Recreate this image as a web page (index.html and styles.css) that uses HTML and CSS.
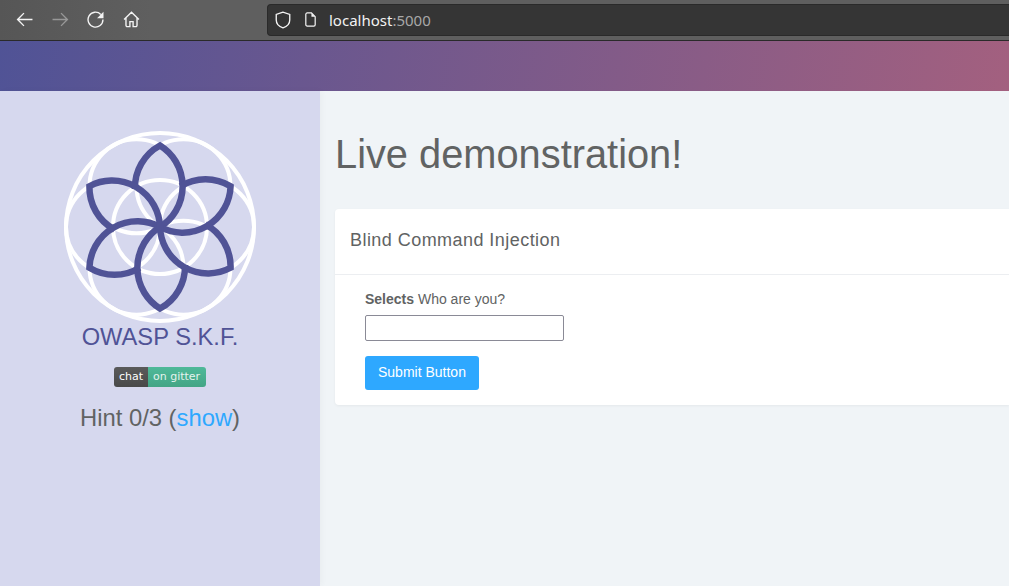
FILE: index.html
```html
<!DOCTYPE html>
<html lang="en">
<head>
    <title>OWASP S.K.F.</title>
    <meta charset="UTF-8">
    <link rel="stylesheet" href="styles.css">
</head>

<body>
    <div class="toolbar">
        <nav class="nav-icons">
            <svg class="icon" viewBox="0 0 16 16"><path d="M15.500 8H1.500M7.500 2 1.500 8l6 6"/></svg>
            <svg class="icon dim" viewBox="0 0 16 16"><path d="M.5 8h14M8.500 2l6 6-6 6"/></svg>
            <svg class="icon" viewBox="0 0 16 16"><path d="M13 3.200A7 7 0 1 0 15 8"/><path class="fill" d="M15.500 .8v6H9.500z"/></svg>
            <svg class="icon" viewBox="0 0 16 16"><path d="M1 8 8 1.200 15 8M2.800 6.500v7A1.200 1.200 0 0 0 4 14.700h2.500V10h3v4.700H12a1.200 1.200 0 0 0 1.200-1.200v-7"/></svg>
        </nav>
        <div class="urlbar">
            <svg class="icon shield" viewBox="0 0 16 16"><path d="M8 1 2 3v5c0 3.500 3 6 6 7 3-1 6-3.500 6-7V3z"/></svg>
            <svg class="icon page" viewBox="0 0 16 16"><path d="M3 2.500A1.500 1.500 0 0 1 4.500 1H9l4 4v8.500a1.500 1.500 0 0 1-1.500 1.500h-7A1.500 1.500 0 0 1 3 13.500z"/><path class="fill" d="M9 1l4 4H9z"/></svg>
            <span class="url">localhost<span class="port">:5000</span></span>
        </div>
    </div>

    <header class="banner"></header>

    <div class="layout">
        <aside class="sidebar">
            <svg class="logo" viewBox="-100 -100 200 200">
                <g class="logo-white">
                    <circle r="94"/>
                    <circle r="47"/>
                    <circle cx="47" r="47"/>
                    <circle cx="-47" r="47"/>
                    <circle cx="23.500" cy="-40.700" r="47"/>
                    <circle cx="-23.500" cy="-40.700" r="47"/>
                    <circle cx="23.500" cy="40.700" r="47"/>
                    <circle cx="-23.500" cy="40.700" r="47"/>
                </g>
                <g class="logo-blue">
                    <path id="petal" d="M-25-38A48 48 0 0 1 0-81.500A48 48 0 0 1 0 0"/>
                    <use href="#petal" transform="rotate(60)"/>
                    <use href="#petal" transform="rotate(120)"/>
                    <use href="#petal" transform="rotate(180)"/>
                    <use href="#petal" transform="rotate(240)"/>
                    <use href="#petal" transform="rotate(300)"/>
                </g>
            </svg>
            <h2 class="brand">OWASP S.K.F.</h2>
            <a class="badge"><span class="badge-left">chat</span><span class="badge-right">on gitter</span></a>
            <p class="hint">Hint 0/3 (<a>show</a>)</p>
        </aside>

        <main class="content">
            <h1>Live demonstration!</h1>
            <section class="card">
                <div class="card-head">Blind Command Injection</div>
                <form class="card-body">
                    <label class="field-label"><b>Selects</b> Who are you?</label>
                    <input class="field" type="text">
                    <button type="button" class="btn">Submit Button</button>
                </form>
            </section>
        </main>
    </div>
</body>
</html>
```

FILE: styles.css
```css
html, body {
    margin: 0;
    height: 100%;
    overflow: hidden;
}

body {
    display: flex;
    flex-direction: column;
    font-family: "Liberation Sans", Arial, sans-serif;
    color: #616363;
    background-color: #f0f4f7;
}

/* browser chrome */
.toolbar {
    display: flex;
    align-items: center;
    flex: none;
    box-sizing: border-box;
    height: 41px;
    padding: 0 0 1px 16px;
    background: linear-gradient(to right, #565656, #5f5f5f 15%);
    border-bottom: 1px solid #2a2a2a;
}

.nav-icons {
    display: flex;
    gap: 18.500px;
    width: 251px;
}

.icon {
    flex: none;
    width: 17px;
    height: 17px;
    fill: none;
    stroke: #f4f4f4;
    stroke-width: 1.300;
}

.icon .fill {
    fill: #f4f4f4;
    stroke: none;
}

.icon.dim {
    stroke: #989898;
}

.icon.shield {
    width: 18px;
    height: 18px;
    stroke-width: 1.200;
}

.icon.page {
    width: 15px;
    height: 15px;
    margin-left: 11px;
    margin-right: 11px;
}

.urlbar {
    display: flex;
    align-items: center;
    flex: 1;
    height: 32px;
    padding-left: 6px;
    box-sizing: border-box;
    background-color: #353535;
    border: 1px solid #2a2a2a;
    border-right: none;
    border-radius: 4px 0 0 4px;
}

.url {
    font-family: "Noto Sans", sans-serif;
    font-size: 15px;
    color: #f2f2f2;
}

.port {
    color: #a8a8a8;
}

/* page */
.banner {
    flex: none;
    height: 50px;
    background: linear-gradient(100deg, #505396, #a3607f);
}

.layout {
    display: flex;
    flex: 1;
    min-height: 0;
}

.sidebar {
    display: flex;
    flex-direction: column;
    align-items: center;
    flex: none;
    width: 320px;
    padding-top: 36px;
    box-sizing: border-box;
    background-color: #d6d8ee;
    box-shadow: 2px 0 6px rgba(0, 0, 0, .03);
}

.logo {
    width: 200px;
    height: 200px;
}

.logo-white {
    fill: none;
    stroke: #fff;
    stroke-width: 4;
}

.logo-blue {
    fill: none;
    stroke: #505396;
    stroke-width: 6.500;
    stroke-linejoin: miter;
    stroke-miterlimit: 6;
}

.brand {
    margin: -4px 0 0;
    font-size: 23.700px;
    font-weight: normal;
    line-height: 28px;
    color: #505396;
}

.badge {
    display: flex;
    margin-top: 16px;
    height: 20px;
    font-family: "DejaVu Sans", sans-serif;
    font-size: 11px;
    line-height: 20px;
    color: #fff;
    border-radius: 3px;
    overflow: hidden;
}

.badge-left {
    padding: 0 5px;
    background: linear-gradient(#5a5a5a, #494949);
}

.badge-right {
    padding: 0 6px 0 5px;
    color: #e4f3ee;
    background: linear-gradient(#4fb999, #43a585);
}

.hint {
    margin: 17px 0 0;
    font-size: 23.800px;
    line-height: 28px;
}

.hint a {
    color: #2ea8ff;
}

.content {
    flex: 1;
    padding: 36px 0 0 15px;
}

h1 {
    margin: 0 0 28px;
    font-size: 39.800px;
    font-weight: normal;
    line-height: 54px;
}

.card {
    background-color: #fff;
    border-radius: 4px 0 0 4px;
    box-shadow: 0 1px 3px rgba(0, 0, 0, .05);
}

.card-head {
    padding: 0 15px;
    height: 65px;
    line-height: 62px;
    font-size: 18px;
    letter-spacing: .45px;
    border-bottom: 1px solid #eceef1;
}

.card-body {
    display: flex;
    flex-direction: column;
    align-items: flex-start;
    padding: 16px 30px 15px;
}

.field-label {
    font-size: 14px;
    line-height: 17px;
}

.field {
    box-sizing: border-box;
    width: 199px;
    height: 26px;
    margin: 7px 0 15px;
    border: 1px solid #8a8a96;
    border-radius: 2px;
    background-color: #fff;
}

.btn {
    height: 34px;
    padding: 0 13px 2px;
    font-family: inherit;
    font-size: 14px;
    color: #fff;
    background-color: #2ea8ff;
    border: none;
    border-radius: 3px;
}
```
